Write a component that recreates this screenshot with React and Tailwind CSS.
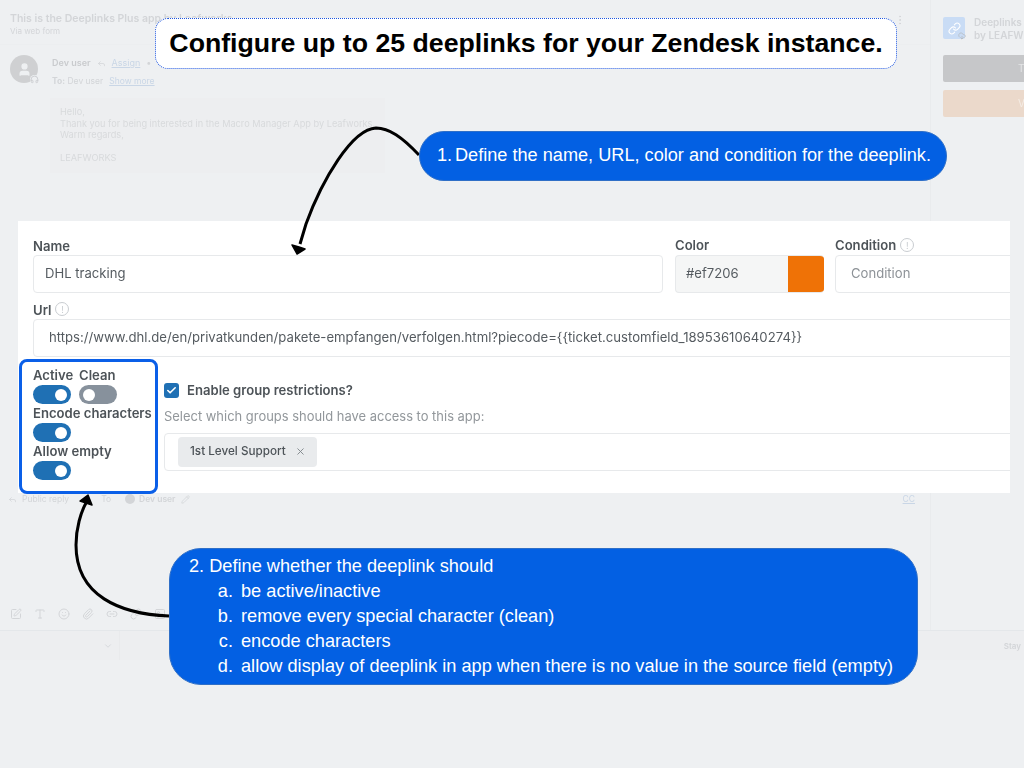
import { Reply, SquarePen, Type, Smile, Paperclip, Link2, Pencil, ChevronDown, Link, Check, X, User, Headphones, CloudDownload, MoreVertical, Image } from 'lucide-react';

const sans = 'font-["Liberation_Sans",Arial,sans-serif]';

function Toggle({ on = true }) {
  return (
    <div className={`flex h-[19px] w-[38px] items-center rounded-full px-[4px] ${on ? 'justify-end bg-[#1f70b4]' : 'justify-start bg-[#87919c]'}`}>
      <div className="h-[12px] w-[12px] rounded-full bg-white" />
    </div>
  );
}

function Hint() {
  return (
    <span className="flex h-[14px] w-[14px] items-center justify-center rounded-full border border-[#c9cdd1] text-[9px] leading-none font-normal text-[#c9cdd1]">!</span>
  );
}

function Background() {
  return (
    <div className="flex h-[660px] flex-col text-[#d3d5d8]">
      <div className="flex h-[630px]">
        <div className="flex w-[931px] shrink-0 flex-col border-r border-[#e9ebed]">
          <div className="flex h-[45px] items-start justify-between border-b border-[#eceef0] px-[10px] pt-[12px]">
            <div>
              <div className="text-[10.5px] leading-[13px] font-semibold">This is the Deeplinks Plus app by Leafworks</div>
              <div className="text-[8px] leading-[13px]">Via web form</div>
            </div>
            <MoreVertical size={12} className="mr-[14px] mt-[2px]" />
          </div>
          <div className="flex gap-[14px] pl-[10px] pt-[10px]">
            <div className="relative flex h-[28px] w-[28px] items-center justify-center rounded-full bg-[#cfd0d2]">
              <User size={15} className="fill-[#eef0f2] text-[#eef0f2]" />
              <Headphones size={9} className="absolute -bottom-[1px] -right-[1px] rounded-full bg-[#eef0f2] text-[#c4c6c9]" />
            </div>
            <div className="flex flex-col pt-[2px]">
              <div className="flex items-center gap-[6px] text-[9px] leading-[12px]">
                <span className="font-semibold text-[#c9cbce]">Dev user</span>
                <Reply size={9} />
                <span className="text-[#c9d6e6] underline">Assign</span>
                <span>•</span>
              </div>
              <div className="mt-[6px] flex gap-[6px] text-[8.5px] leading-[12px]">
                <span><b>To:</b> Dev user</span>
                <span className="text-[#c9d6e6] underline">Show more</span>
              </div>
            </div>
          </div>
          <div className="ml-[50px] mt-[11px] h-[75px] w-[335px] whitespace-nowrap bg-[#edeef0] px-[10px] pt-[8px] text-[9.2px] leading-[11.6px] text-[#d8dadc]">
            <div>Hello,</div>
            <div>Thank you for being interested in the Macro Manager App by Leafworks.</div>
            <div>Warm regards,</div>
            <div className="mt-[11.6px]">LEAFWORKS</div>
          </div>
          <div className="mt-[320px] flex items-center pl-[8px] pr-[15px] text-[8.5px] leading-[12px]">
            <Reply size={9} />
            <span className="ml-[5px]">Public reply</span>
            <span className="ml-[32px]">To</span>
            <span className="ml-[14px] flex items-center gap-[4px] font-semibold">
              <span className="h-[10px] w-[10px] rounded-full bg-[#d3d5d8]" />
              Dev user
              <Pencil size={9} className="ml-[2px]" />
            </span>
            <span className="ml-auto text-[#c9d6e6] underline">CC</span>
          </div>
          <div className="mt-auto flex items-center gap-[12px] pb-[10px] pl-[10px]">
            <SquarePen size={12} />
            <Type size={12} />
            <Smile size={12} />
            <Paperclip size={12} />
            <Link2 size={12} />
            <Link size={12} />
            <Image size={12} />
          </div>
        </div>
        <div className="flex flex-1 flex-col gap-[8px] pl-[12px] pt-[17px]">
          <div className="flex h-[22px] items-center gap-[9px] text-[10px] leading-[13px] font-semibold">
            <div className="relative flex h-[22px] w-[22px] shrink-0 items-center justify-center rounded-[2px] bg-[#c9dcf5]">
              <Link size={13} className="text-white" />
              <CloudDownload size={8} className="absolute -bottom-[1px] -right-[1px] text-[#b4b6b8]" />
            </div>
            <div className="whitespace-nowrap pt-[2px]">Deeplinks<br />by LEAFW</div>
          </div>
          <div className="mt-[8px] flex h-[27px] items-center rounded-l-[2px] bg-[#c6c7c9] pl-[75px] text-[10px] text-[#e4e5e6]">T</div>
          <div className="flex h-[27px] items-center rounded-l-[2px] bg-[#ebd9cb] pl-[75px] text-[10px] text-[#f4ece5]">V</div>
        </div>
      </div>
      <div className="flex h-[30px] items-center border-t border-[#e4e7ea] bg-[#edeef0]">
        <div className="flex h-full w-[120px] items-center justify-end border-r border-[#e9eaec] pr-[6px]">
          <ChevronDown size={10} />
        </div>
        <span className="ml-auto pr-[3px] text-[8px] font-semibold">Stay</span>
      </div>
    </div>
  );
}

function FormPanel() {
  return (
    <div className='absolute left-[18px] top-[221px] flex h-[272px] w-[992px] flex-col overflow-hidden bg-white pl-[15px] pt-[17px] font-["Inter",sans-serif] text-[13.1px] text-[#4d5358] blur-[0.3px]'>
      <div className="flex w-[1100px]">
        <div className="mr-[12px] w-[630px] shrink-0">
          <div className="h-[17px] font-semibold leading-[16px]">Name</div>
          <div className="flex h-[38px] items-center rounded-[4px] border border-[#e7e9eb] px-[11px] text-[#555b60]">DHL tracking</div>
        </div>
        <div className="mr-[11px] w-[149px] shrink-0">
          <div className="h-[17px] font-semibold leading-[15px]">Color</div>
          <div className="flex h-[38px] items-stretch overflow-hidden rounded-[4px] border border-r-0 border-[#e7e9eb] bg-[#f5f6f6]">
            <span className="flex flex-1 items-center pl-[10px] text-[#555b60]">#ef7206</span>
            <span className="w-[36px] bg-[#ef7206]" />
          </div>
        </div>
        <div className="w-[239px] shrink-0">
          <div className="flex h-[17px] items-start gap-[4px] font-semibold leading-[15px]">Condition <Hint /></div>
          <div className="flex h-[38px] items-center rounded-[4px] border border-[#e7e9eb] pl-[15px] text-[#8d9297]">Condition</div>
        </div>
      </div>
      <div className="mt-[9px] flex h-[17px] items-start gap-[4px] font-semibold leading-[16px]">Url <Hint /></div>
      <div className="flex h-[38px] w-[1000px] shrink-0 items-center rounded-[4px] border border-[#e7e9eb] pl-[15px] text-[13.17px] text-[#555b60]">
        https://www.dhl.de/en/privatkunden/pakete-empfangen/verfolgen.html?piecode={'{{'}ticket.customfield_18953610640274{'}}'}
      </div>
      <div className="mt-[24px] ml-[131px] flex items-center gap-[8px]">
        <span className="flex h-[15px] w-[15px] items-center justify-center rounded-[3px] bg-[#1f70b4]">
          <Check size={11} strokeWidth={3.5} className="text-white" />
        </span>
        <span className="font-semibold">Enable group restrictions?</span>
      </div>
      <div className="ml-[131px] mt-[7px] text-[12.95px] leading-[16px] text-[#92979b]">Select which groups should have access to this app:</div>
      <div className="ml-[131px] mt-[9px] flex h-[38px] w-[900px] shrink-0 items-center rounded-[4px] border border-[#e7e9eb] pl-[13px]">
        <span className="flex h-[30px] w-[139px] items-center justify-between rounded-[4px] bg-[#e9ebed] pl-[12px] pr-[11px] text-[11.7px] font-medium">
          1st Level Support
          <X size={11} className="text-[#7f858a]" />
        </span>
      </div>
    </div>
  );
}

function ToggleBox() {
  return (
    <div className='absolute left-[19px] top-[359px] flex h-[135px] w-[139px] flex-col rounded-[8px] border-[3px] border-[#0a5fe8] bg-white pl-[11px] pt-[4px] font-["Inter",sans-serif] text-[13.1px] font-semibold leading-[19px] text-[#4d5358] blur-[0.3px]'>
      <div className="flex gap-[8px]">
        <div className="w-[38px] whitespace-nowrap"><div>Active</div><Toggle /></div>
        <div><div>Clean</div><Toggle on={false} /></div>
      </div>
      <div className="whitespace-nowrap">Encode characters</div>
      <Toggle />
      <div>Allow empty</div>
      <Toggle />
    </div>
  );
}

function Arrows() {
  return (
    <svg className="pointer-events-none absolute left-0 top-0" width="1024" height="768" viewBox="0 0 1024 768" fill="none">
      <path d="M419 155C402 137 389 128 376 128C352 129 322 180 306 224L300 244" stroke="#000" strokeWidth="3" />
      <path d="M292 245L299 247L305 249L297 254Z" fill="#000" stroke="#000" strokeWidth="1.5" strokeLinejoin="round" />
      <path d="M169 616C120 614 76 596 76 545C76 528 81 512 86 503" stroke="#000" strokeWidth="3" />
      <path d="M80 501L88 495L92 505L86 503Z" fill="#000" stroke="#000" strokeWidth="1.5" strokeLinejoin="round" />
    </svg>
  );
}

const items = [
  ['a.', 'be active/inactive'],
  ['b.', 'remove every special character (clean)'],
  ['c.', 'encode characters'],
  ['d.', 'allow display of deeplink in app when there is no value in the source field (empty)'],
];

export default function App() {
  return (
    <div className='relative h-[768px] w-[1024px] overflow-hidden bg-[#eef0f2] font-["Inter",sans-serif]'>
      <div className="blur-[0.4px]">
        <Background />
      </div>
      <FormPanel />
      <ToggleBox />
      <Arrows />

      <div className={`absolute left-[155px] top-[18px] flex h-[51px] w-[742px] items-center justify-center rounded-[13px] border border-dotted border-[#1d55e0] bg-white text-[26.7px] font-bold text-black ${sans}`}>
        Configure up to 25 deeplinks for your Zendesk instance.
      </div>

      <div className={`absolute left-[419px] top-[131px] flex h-[50px] w-[528px] items-center rounded-[25px] border border-[#2f6fc7] bg-[#0360e3] pl-[17px] text-[18.15px] text-white ${sans}`}>
        <span className="w-[18px]">1.</span>
        <span>Define the name, URL, color and condition for the deeplink.</span>
      </div>

      <div className={`absolute left-[169px] top-[548px] h-[137px] w-[749px] rounded-[32px] border border-[#2f6fc7] bg-[#0360e3] pl-[19px] pt-[5px] text-[18.2px] leading-[24.9px] text-white ${sans}`}>
        <div>2. Define whether the deeplink should</div>
        {items.map(([label, text]) => (
          <div key={label} className="flex gap-[8px]">
            <span className="w-[44px] text-right">{label}</span>
            <span>{text}</span>
          </div>
        ))}
      </div>
    </div>
  );
}
